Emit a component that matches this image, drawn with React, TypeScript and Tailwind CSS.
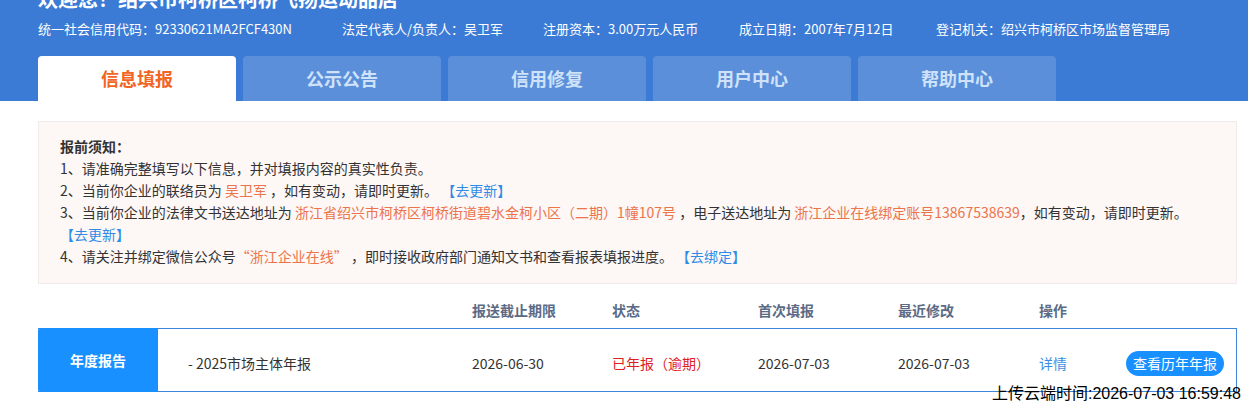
export default function App() {
  const tabs = ["信息填报", "公示公告", "信用修复", "用户中心", "帮助中心"];
  const orange = "text-[#ec744a]";
  const link = "text-[#2f8be6]";
  return (
    <div className="w-[1248px] h-[408px] overflow-hidden bg-white font-['Noto_Sans_CJK_SC','Noto_Sans',sans-serif]">
      <div className="flex flex-col bg-[#3b7bd5] px-[38px]">
        <h1 className="-mt-[15px] text-[20px] leading-[28px] font-bold text-white">
          欢迎您！绍兴市柯桥区柯桥飞扬运动品店
        </h1>
        <div className="mt-[6px] flex text-[13px] leading-[20px] text-white">
          <span className="w-[304px]">统一社会信用代码：92330621MA2FCF430N</span>
          <span className="w-[201px]">法定代表人/负责人：吴卫军</span>
          <span className="w-[196px]">注册资本：3.00万元人民币</span>
          <span className="w-[197px]">成立日期：2007年7月12日</span>
          <span>登记机关：绍兴市柯桥区市场监督管理局</span>
        </div>
        <div className="mt-[17px] flex gap-[7px]">
          {tabs.map((t, i) => (
            <div
              key={t}
              className={
                i === 0
                  ? "flex h-[45px] w-[198px] items-center justify-center rounded-t-[4px] bg-white text-[18px] font-bold text-[#f26522]"
                  : "flex h-[45px] w-[198px] items-center justify-center rounded-t-[4px] bg-[#5b8fd9] text-[18px] font-bold text-[#cfe2fa]"
              }
            >
              {t}
            </div>
          ))}
        </div>
      </div>

      <div className="pl-[38px] pr-[11px]">
        <div className="mt-[20px] border border-[#f0eaea] bg-[#fdf7f6] pl-[21px] pr-[20px] pt-[13px] pb-[16px] text-[14px] leading-[22px] text-[#333]">
          <div className="font-bold">报前须知：</div>
          <div>1、请准确完整填写以下信息，并对填报内容的真实性负责。</div>
          <div>
            2、当前你企业的联络员为 <span className={orange}>吴卫军</span> ，如有变动，请即时更新。{" "}
            <span className={link}>【去更新】</span>
          </div>
          <div>
            3、当前你企业的法律文书送达地址为{" "}
            <span className={orange}>浙江省绍兴市柯桥区柯桥街道碧水金柯小区（二期）1幢107号</span> ，电子送达地址为{" "}
            <span className={orange}>浙江企业在线绑定账号13867538639</span>，如有变动，请即时更新。
            <br />
            <span className={link}>【去更新】</span>
          </div>
          <div>
            4、请关注并绑定微信公众号<span className={orange}>“浙江企业在线”</span> ，即时接收政府部门通知文书和查看报表填报进度。{" "}
            <span className={link}>【去绑定】</span>
          </div>
        </div>

        <div className="mt-[8px] flex h-[36px] items-center text-[14px] font-bold text-[#5b6b86]">
          <div className="w-[434px]" />
          <div className="w-[140px]">报送截止期限</div>
          <div className="w-[146px]">状态</div>
          <div className="w-[140px]">首次填报</div>
          <div className="w-[141px]">最近修改</div>
          <div>操作</div>
        </div>

        <div className="relative">
          <div className="flex h-[64px] border-y border-r border-[#3f87da]">
            <div className="-my-px flex w-[120px] items-center justify-center rounded-l-[3px] bg-[#1890ff] text-[14px] font-bold text-white">
              年度报告
            </div>
            <div className="flex flex-1 items-center pt-[7px] text-[14px] text-[#333]">
              <div className="w-[314px] pl-[30px]">- 2025市场主体年报</div>
              <div className="w-[140px]">2026-06-30</div>
              <div className="w-[146px] text-[#e0201f]">已年报（逾期）</div>
              <div className="w-[140px]">2026-07-03</div>
              <div className="w-[141px]">2026-07-03</div>
              <div className="w-[87px] text-[#3b8fe3]">详情</div>
              <div className="flex h-[25px] items-center rounded-full bg-[#1890ff] px-[7px] text-white">
                查看历年年报
              </div>
            </div>
          </div>
          <span className="absolute right-[-4px] top-[56px] text-[16px] leading-[20px] text-black font-['Liberation_Sans','Noto_Sans_CJK_SC',sans-serif]">
            上传云端时间:2026-07-03 16:59:48
          </span>
        </div>
      </div>
    </div>
  );
}
